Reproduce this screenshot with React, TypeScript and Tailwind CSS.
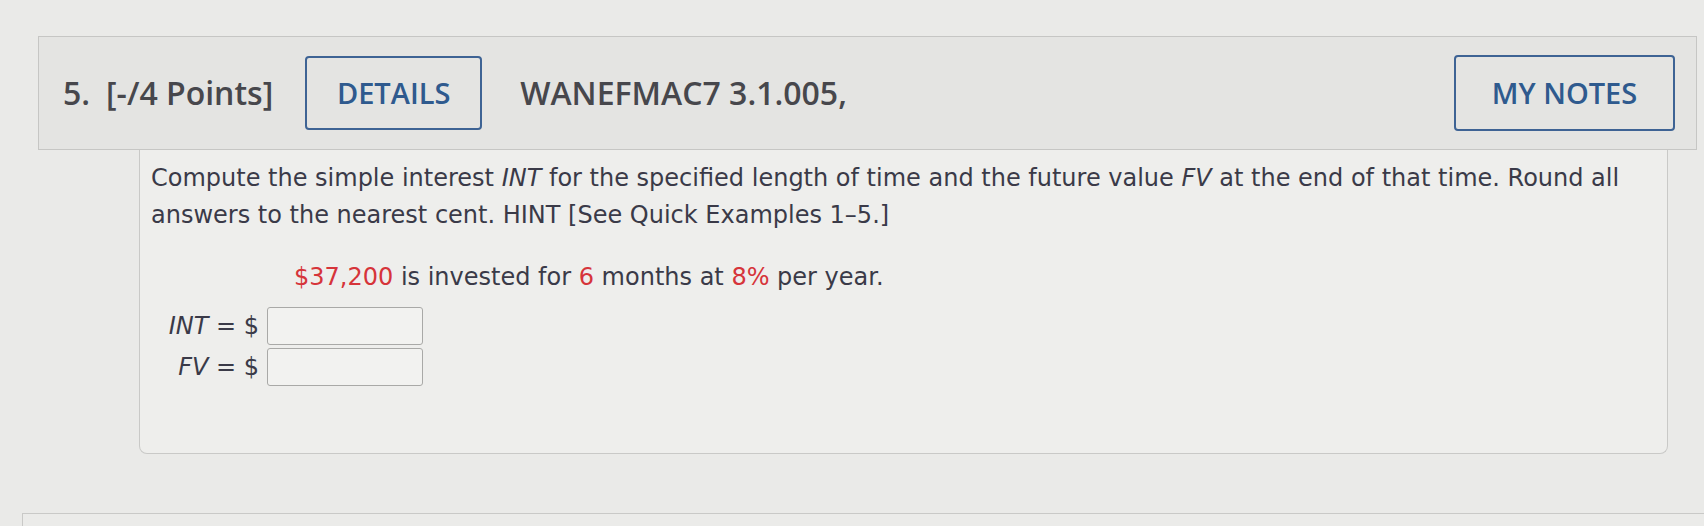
import React from 'react';

const sans = { fontFamily: '"DejaVu Sans", Verdana, sans-serif' };

function AnswerRow({ label, className }: { label: React.ReactNode; className?: string }) {
  return (
    <div className={`flex items-center ${className ?? ''}`}>
      <div className="w-[116px] pr-[8px] text-right whitespace-nowrap">{label}</div>
      <div className="h-[38px] w-[156px] rounded-[3px] border border-[#a9a9a7] bg-[#f2f2f0]" />
    </div>
  );
}

export default function App() {
  return (
    <div className="h-[526px] w-[1704px] overflow-hidden bg-[#eaeae8]">
      <div className="pl-[38px] pr-[7px] pt-[36px]">
        <div
          className="flex h-[114px] items-center border border-[#c6c6c4] bg-[#e4e4e2] pl-[24px] pr-[21px] text-[32px] font-semibold text-[#47474c]"
          style={{ fontFamily: '"Open Sans", sans-serif' }}
        >
          <span>5.</span>
          <span className="ml-[16px]">[-/4 Points]</span>
          <button
            type="button"
            className="ml-[32px] h-[74px] w-[177px] rounded-[4px] border-2 border-[#3e6394] text-[29px] text-[#2f5a8e]"
          >
            DETAILS
          </button>
          <span className="ml-[38px]">WANEFMAC7 3.1.005,</span>
          <button
            type="button"
            className="ml-auto h-[76px] w-[221px] rounded-[4px] border-2 border-[#3e6394] text-[29px] text-[#2f5a8e]"
          >
            MY NOTES
          </button>
        </div>
        <div
          className="ml-[101px] mr-[29px] h-[304px] rounded-b-[8px] border border-t-0 border-[#c9c9c7] bg-[#eeeeec] pl-[11px] pt-[10px] text-[24px] leading-[37px] text-[#3a3a48]"
          style={sans}
        >
          <p className="whitespace-nowrap">
            Compute the simple interest <i>INT</i> for the specified length of time and the future value <i>FV</i> at the end of that time. Round all
            <br />
            answers to the nearest cent. HINT [See Quick Examples 1–5.]
          </p>
          <p className="mt-[25px] pl-[143px]">
            <span className="text-[#d6343a]">$37,200</span> is invested for <span className="text-[#d6343a]">6</span> months at{' '}
            <span className="text-[#d6343a]">8%</span> per year.
          </p>
          <AnswerRow className="mt-[11px]" label={<><i>INT</i> = $</>} />
          <AnswerRow className="mt-[3px]" label={<><i>FV</i> = $</>} />
        </div>
      </div>
      <div className="ml-[22px] mt-[59px] h-[40px] border-t border-l border-[#c9c9c7] bg-[#ebebe9]" />
    </div>
  );
}
